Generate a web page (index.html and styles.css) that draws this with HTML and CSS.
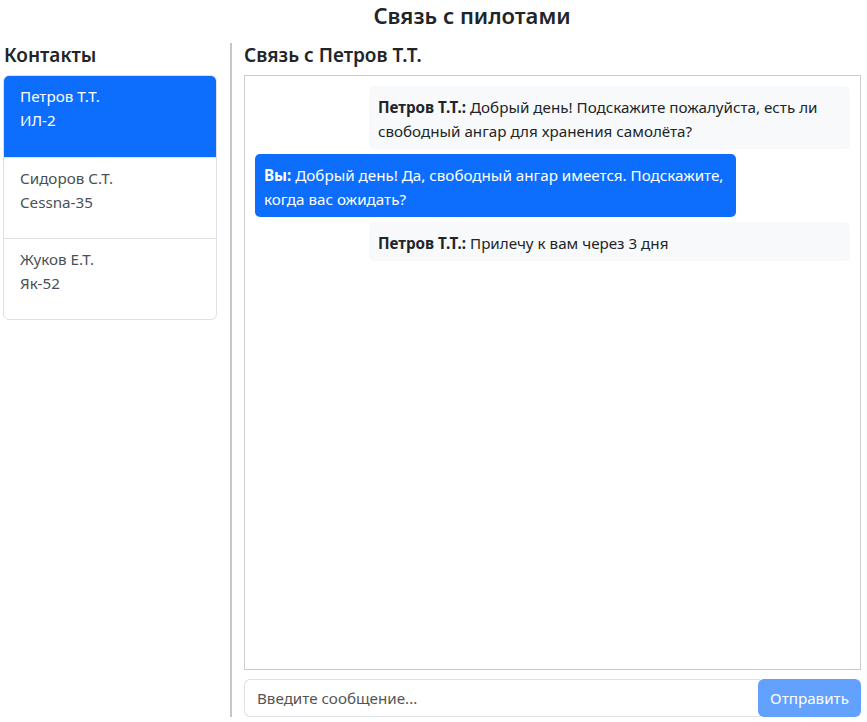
FILE: index.html
```html
<!DOCTYPE html>
<html lang="ru">
<head>
<meta charset="utf-8">
<title>Связь с пилотами</title>
<link rel="stylesheet" href="styles.css">
</head>
<body>
<div class="page">
  <h1 class="title">Связь с пилотами</h1>
  <div class="columns">
    <aside class="sidebar">
      <h2 class="heading">Контакты</h2>
      <div class="contacts">
        <div class="contact active"><div>Петров Т.Т.</div><div>ИЛ-2</div></div>
        <div class="contact"><div>Сидоров С.Т.</div><div>Cessna-35</div></div>
        <div class="contact"><div>Жуков Е.Т.</div><div>Як-52</div></div>
      </div>
    </aside>
    <main class="chat">
      <h2 class="heading">Связь с Петров Т.Т.</h2>
      <div class="messages">
        <div class="msg incoming"><b>Петров Т.Т.:</b> Добрый день! Подскажите пожалуйста, есть ли свободный ангар для хранения самолёта?</div>
        <div class="msg outgoing"><b>Вы:</b> Добрый день! Да, свободный ангар имеется. Подскажите, когда вас ожидать?</div>
        <div class="msg incoming"><b>Петров Т.Т.:</b> Прилечу к вам через 3 дня</div>
      </div>
      <div class="composer">
        <input class="input" type="text" placeholder="Введите сообщение...">
        <button class="send" disabled>Отправить</button>
      </div>
    </main>
  </div>
</div>
</body>
</html>
```

FILE: styles.css
```css
* { box-sizing: border-box; }
html, body { margin: 0; height: 100%; }
body {
  font-family: "Noto Sans", "Open Sans", sans-serif;
  font-size: 15.2px;
  line-height: 24px;
  color: #212529;
  background: #fff;
}
.page {
  height: 100vh;
  display: flex;
  flex-direction: column;
  padding: 0 6px 5px 3px;
}
.title {
  margin: 0 0 12px;
  font-size: 22px;
  line-height: 31px;
  font-weight: 600;
  text-align: center;
  padding-left: 80px;
}
.columns {
  flex: 1;
  display: flex;
  min-height: 0;
}
.sidebar {
  width: 214px;
  flex: none;
  margin-right: 13px;
}
.heading {
  margin: 0 0 8px 1px;
  font-size: 19px;
  line-height: 24px;
  font-weight: 600;
}
.chat .heading { margin-left: 0; }
.contacts {
  border: 1px solid #dee2e6;
  border-radius: 6px;
  overflow: hidden;
}
.contact {
  height: 81px;
  padding: 8px 16px 0;
  color: #495057;
  border-top: 1px solid #dee2e6;
}
.contact:first-child { border-top: none; }
.contact.active {
  background: #0d6efd;
  color: #fff;
}
.chat {
  flex: 1;
  display: flex;
  flex-direction: column;
  border-left: 2px solid #c8c8c8;
  padding-left: 12px;
  min-width: 0;
}
.messages {
  flex: 1;
  border: 1px solid #ccc;
  padding: 10px;
  display: flex;
  flex-direction: column;
  gap: 5px;
  overflow: auto;
}
.msg {
  width: 80.85%;
  padding: 9px 9px 6px;
  border-radius: 5px;
}
.incoming {
  align-self: flex-end;
  background: #f8f9fa;
}
.outgoing {
  align-self: flex-start;
  background: #0d6efd;
  color: #fff;
}
.composer {
  display: flex;
  margin-top: 9px;
  height: 38px;
}
.input {
  flex: 1;
  min-width: 0;
  border: 1px solid #dee2e6;
  border-right: none;
  border-radius: 6px 0 0 6px;
  padding: 6px 12px;
  font: inherit;
  color: #212529;
  outline: none;
}
.input::placeholder { color: #555; }
.send {
  width: 103px;
  border: none;
  border-radius: 6px;
  margin-left: -2px;
  background: #62a1fe;
  color: #fff;
  font: inherit;
  padding: 0;
}
```
